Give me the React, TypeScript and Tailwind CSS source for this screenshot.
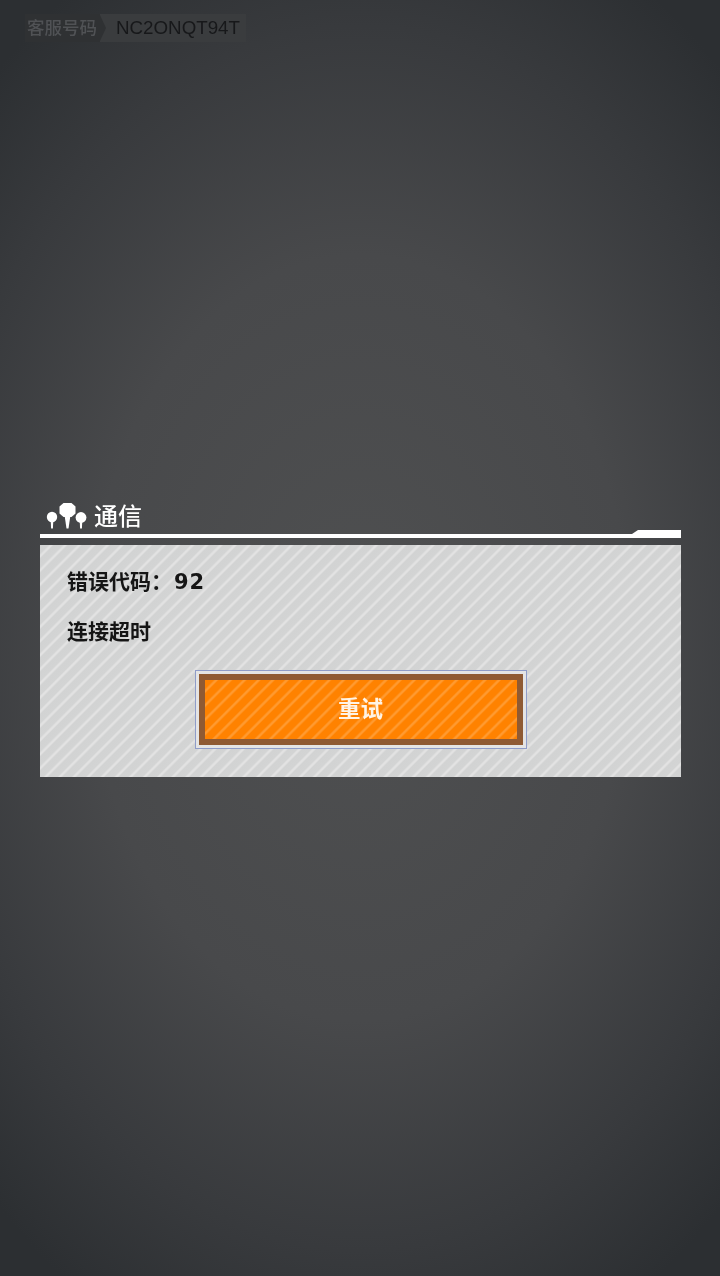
const cjk = 'font-["Liberation_Sans","Noto_Sans_CJK_SC",sans-serif]';

function TreesIcon() {
  return (
    <svg width="42" height="28" viewBox="0 0 42 28" fill="#fff">
      <circle cx="6" cy="14" r="5.2" />
      <path d="M4.6 16h2.8l-.5 9.5H5.1z" />
      <path d="M17.5 0h8l4 3.5v7L25.5 14h-8l-4-3.5v-7z" />
      <path d="M18.5 12h6l-2 13.5h-2z" />
      <circle cx="35" cy="14.5" r="5.4" />
      <path d="M33.6 16h2.8l-.5 9.5h-1.8z" />
    </svg>
  );
}

export default function App() {
  return (
    <div
      className={`${cjk} h-[1276px] w-[720px] overflow-hidden bg-[radial-gradient(ellipse_75%_60%_at_50%_50%,#4f5051_0%,#48494b_50%,#383a3d_80%,#2c2f32_100%)]`}
    >
      <div className="flex h-[28px] mt-[14px] pl-[25px] items-stretch">
        <div className="relative z-10 flex items-center w-[81px] bg-[#2f3133] pl-[2px] text-[17.5px] font-medium text-[#505255] blur-[0.4px] [clip-path:polygon(0_0,92%_0,100%_50%,92%_100%,0_100%)]">
          客服号码
        </div>
        <div className="flex items-center -ml-[6px] w-[146px] bg-[#3a3c3e] pl-[16px] text-[18.75px] text-[#17181a] blur-[0.4px]">
          NC2ONQT94T
        </div>
      </div>

      <div className="mt-[461px] mx-[40px] w-[641px]">
        <div className="flex items-center h-[27px] pl-[6px] gap-[6px]">
          <TreesIcon />
          <span className="text-[24px] leading-none font-medium text-white blur-[0.3px]">通信</span>
        </div>
        <div className="flex items-end h-[8px]">
          <div className="flex-1 h-[4px] bg-white" />
          <svg width="50" height="8" viewBox="0 0 50 8" className="block -ml-px" fill="#fff">
            <path d="M0 8V4H1L7 0H50V8z" />
          </svg>
        </div>

        <div className="mt-[7px] h-[232px] px-[27px] pt-[25px] bg-[repeating-linear-gradient(135deg,#d2d3d3_0px,#d3d4d4_6px,#e2e2e2_7.5px,#e2e2e2_8.5px,#d2d3d3_10px)]">
          <p className="text-[21px] leading-[24px] font-bold text-[#151515] blur-[0.3px]">
            错误代码：
            <span className="ml-[2px] tracking-[1px] font-['DejaVu_Sans',sans-serif]">92</span>
          </p>
          <p className="mt-[26px] text-[21px] leading-[24px] font-bold text-[#151515] blur-[0.3px]">连接超时</p>
          <div className="flex justify-center mt-[26px]">
            <button className="flex items-center justify-center w-[332px] h-[79px] border border-[#8f9cc8] bg-[#e4e4e4] p-[3px]">
              <span className="flex items-center justify-center w-full h-full border-[6px] border-[#8f5a33] bg-[repeating-linear-gradient(135deg,#ff8200_0px,#ff8200_6px,#ff9a30_7.5px,#ff9a30_8.5px,#ff8200_10px)]">
                <span className="text-[22.5px] font-bold text-[#fff4e6] blur-[0.4px]">重试</span>
              </span>
            </button>
          </div>
        </div>
      </div>
    </div>
  );
}
